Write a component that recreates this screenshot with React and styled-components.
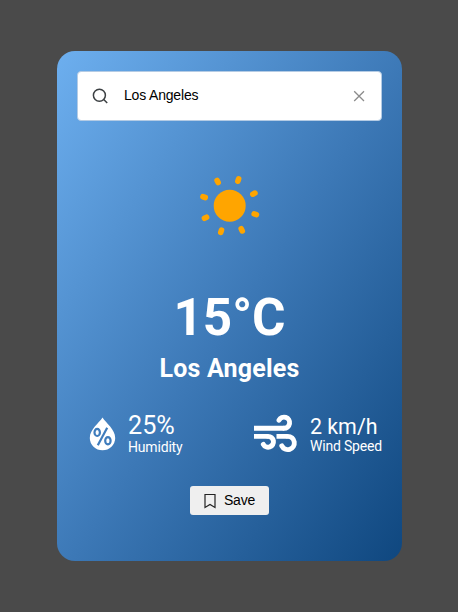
import React from "react";
import styled, { createGlobalStyle } from "styled-components";

const GlobalStyle = createGlobalStyle`
  * { box-sizing: border-box; }
  body { margin: 0; background: #4a4a4a; font-family: Roboto, sans-serif; }
`;

const Page = styled.main`
  height: 612px;
  display: flex;
  justify-content: center;
  align-items: center;
  padding-left: 1px;
`;

const Card = styled.section`
  width: 345px;
  height: 510px;
  padding: 20px 20px 0;
  border-radius: 18px;
  background: linear-gradient(to bottom right, #6dafef 0%, #3c78b6 52%, #0f477f 100%);
  color: #fff;
  display: flex;
  flex-direction: column;
  align-items: center;
`;

const SearchBox = styled.div`
  width: 305px;
  height: 50px;
  flex: none;
  display: flex;
  align-items: center;
  padding: 0 14px 0 14px;
  border: 1px solid #b4cbe4;
  border-radius: 4px;
  background: #fff;
`;

const SearchInput = styled.input`
  flex: 1;
  min-width: 0;
  margin-left: 15px;
  padding: 0 0 3px;
  border: 0;
  outline: 0;
  background: transparent;
  color: #000;
  font: 14px "Liberation Sans", Arial, sans-serif;
  letter-spacing: -0.18px;
`;

const Sun = styled.svg`
  width: 80px;
  height: 80px;
  flex: none;
  margin-top: 45px;
`;

const Temperature = styled.h1`
  margin: 41px 0 0;
  font-size: 51.2px;
  line-height: 61px;
  font-weight: 700;
`;

const City = styled.h2`
  margin: 6px 0 0;
  font-size: 25px;
  line-height: 30px;
  font-weight: 700;
  letter-spacing: 0.2px;
`;

const Stats = styled.div`
  width: 305px;
  height: 45px;
  margin-top: 28px;
  padding-left: 12px;
  display: flex;
  justify-content: space-between;
`;

const Stat = styled.div`
  display: flex;
  gap: 12px;
`;

const StatText = styled.div`
  display: flex;
  flex-direction: column;
`;

const StatValue = styled.span`
  font-size: ${(p) => p.$size}px;
  line-height: ${(p) => p.$line}px;
`;

const StatLabel = styled.span`
  margin-top: ${(p) => p.$shift}px;
  font-size: 14px;
  line-height: 16px;
  letter-spacing: -0.18px;
`;

const SaveButton = styled.button`
  width: 79px;
  height: 29px;
  margin-top: 29px;
  padding: 0 1px 0 0;
  border: 0;
  border-radius: 3px;
  background: #efefef;
  color: #000;
  display: flex;
  align-items: center;
  justify-content: center;
  gap: 7px;
  font: 14px "Liberation Sans", Arial, sans-serif;
  letter-spacing: -0.18px;
`;

const SaveText = styled.span`
  padding-bottom: 2px;
`;

const rays = [-71.5, -26.5, 18.5, 63.5, 108.5, 153.5, 198.5, 243.5];

export default function App() {
  return (
    <>
      <GlobalStyle />
      <Page>
        <Card>
          <SearchBox>
            <svg width="17" height="17" viewBox="0 0 17 17" fill="none" stroke="#3c4043" strokeWidth="1.5">
              <circle cx="7.4" cy="7.2" r="6" />
              <path d="M11.7 11.5L15.2 15" />
            </svg>
            <SearchInput defaultValue="Los Angeles" aria-label="City" />
            <svg width="16" height="16" viewBox="0 0 16 16" stroke="#8c8c8c" strokeWidth="1.3">
              <path d="M3.2 3.2L13 13M13 3.2L3.2 13" />
            </svg>
          </SearchBox>
          <Sun viewBox="0.3 0.3 80 80">
            <circle cx="40" cy="40" r="16" fill="orange" />
            {rays.map((a) => (
              <path key={a} d="M65.8 40H68.2" stroke="orange" strokeWidth="5.6" strokeLinecap="round" transform={`rotate(${a} 40 40)`} />
            ))}
          </Sun>
          <Temperature>15°C</Temperature>
          <City>Los Angeles</City>
          <Stats>
            <Stat>
              <svg width="27" height="44" viewBox="0 0 27 44" fill="none">
                <path d="M13.5 5.5C10 11.2 0.8 17.2 0.8 26A12.7 12.2 0 0 0 26.2 26C26.2 17.2 17 11.2 13.5 5.5Z" fill="#fff" />
                <g stroke="#3f7cbc" strokeWidth="2.2">
                  <ellipse cx="8.2" cy="20.4" rx="2.7" ry="3.6" />
                  <ellipse cx="18.9" cy="28.7" rx="2.7" ry="3.6" />
                  <path d="M18.2 15.7L8.8 33.2" />
                </g>
              </svg>
              <StatText>
                <StatValue $size={25.2} $line={27}>25%</StatValue>
                <StatLabel $shift={0}>Humidity</StatLabel>
              </StatText>
            </Stat>
            <Stat>
              <svg width="45" height="44" viewBox="0 0 45 44" fill="none" stroke="#fff" strokeWidth="4.9">
                <path d="M1 16.3H31.2M1 24.4H15.1M23.5 24.4H34.7" />
                <g strokeLinecap="round">
                  <path d="M30.9 16.3A5.6 5.6 0 1 0 26 8.2" />
                  <path d="M15.1 24.4A5.4 5.4 0 1 1 10.3 32.3" />
                  <path d="M34.7 24.4A6.6 6.6 0 1 1 28.8 33.9" />
                </g>
              </svg>
              <StatText>
                <StatValue $size={21.4} $line={29}>2 km/h</StatValue>
                <StatLabel $shift={-3}>Wind Speed</StatLabel>
              </StatText>
            </Stat>
          </Stats>
          <SaveButton>
            <svg width="14" height="16" viewBox="0 0 14 16" fill="none" stroke="#222" strokeWidth="1.2">
              <path d="M2 1.5H12V14.5L7 11.5L2 14.5Z" />
            </svg>
            <SaveText>Save</SaveText>
          </SaveButton>
        </Card>
      </Page>
    </>
  );
}
